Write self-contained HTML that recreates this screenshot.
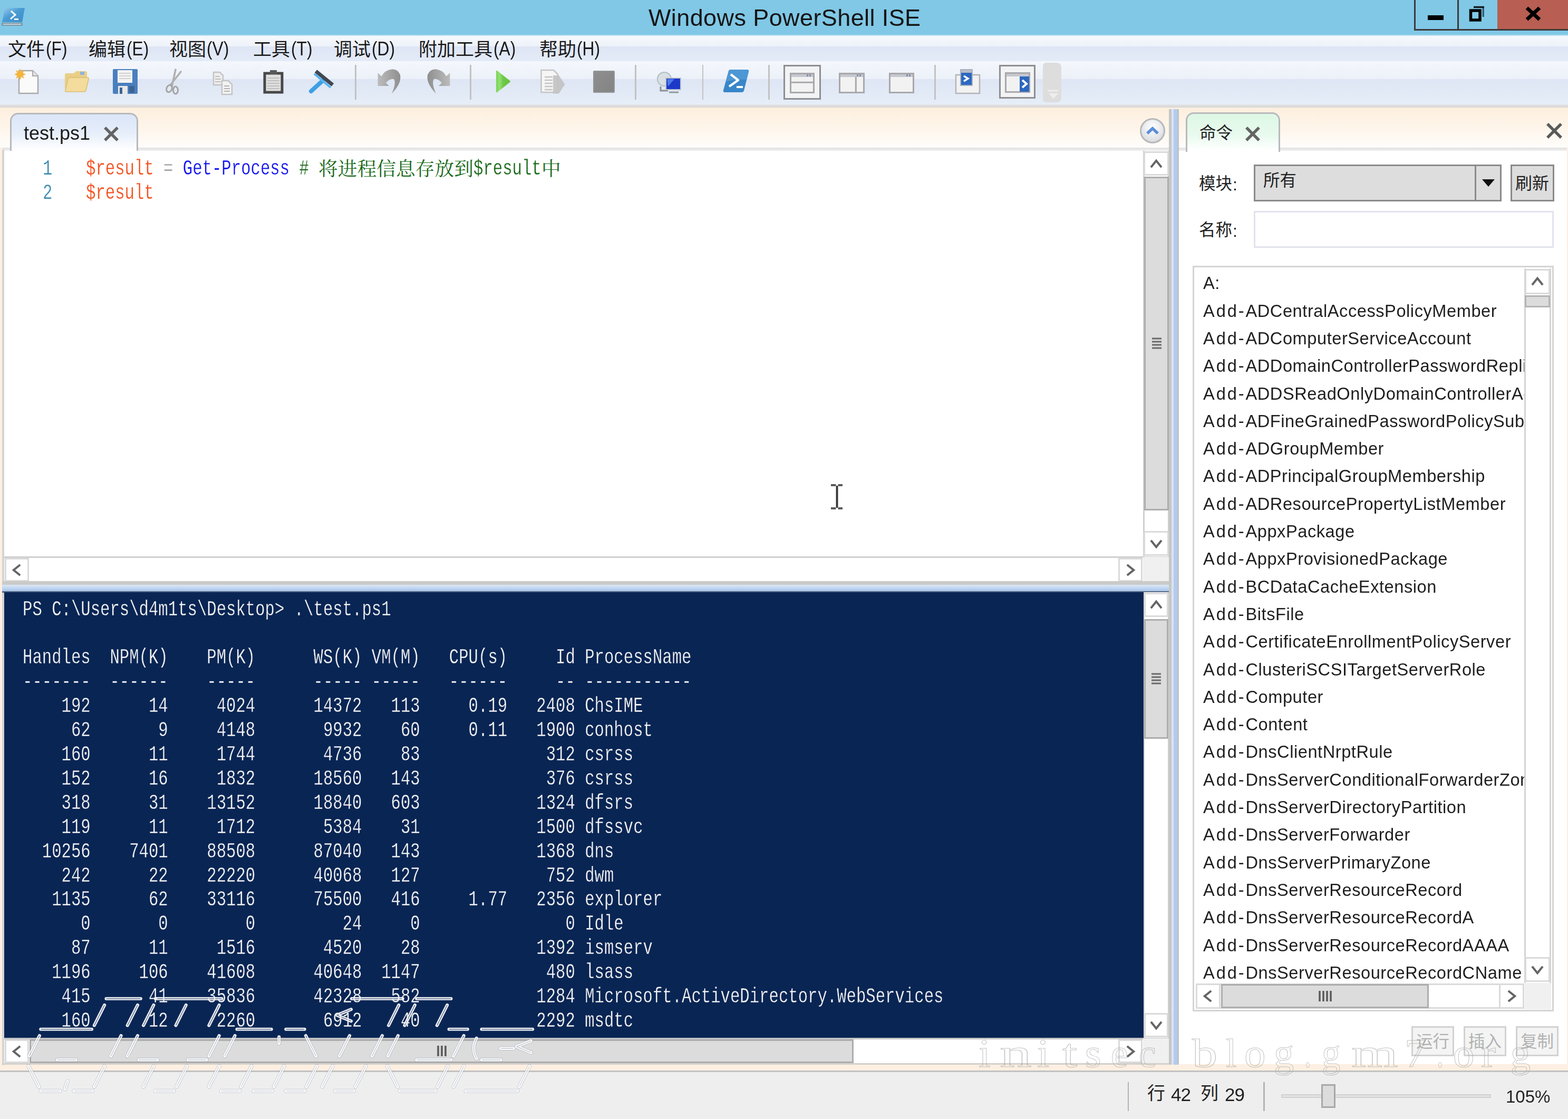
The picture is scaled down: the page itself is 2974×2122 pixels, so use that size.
<!DOCTYPE html><html><head><meta charset="utf-8"><title>Windows PowerShell ISE</title><style>
html,body{margin:0;padding:0}
body{width:2974px;height:2122px;position:relative;overflow:hidden;background:#FDF0E2;font-family:"Liberation Sans",sans-serif;color:#000}
.a{position:absolute}
.cj{position:absolute;overflow:visible}
.t{position:absolute;white-space:pre;margin:0}
.sb{position:absolute;background:#fff;border:2px solid #D8D8D8;box-sizing:border-box}
.th{position:absolute;background:#DCDCDC;border:2px solid #B0B0B0;box-sizing:border-box}
svg{display:block}
pre{margin:0}
</style></head><body><div class="a" style="left:0px;top:0px;width:2974px;height:66px;background:#80C8E6"></div><div class="a" style="left:0px;top:66px;width:2974px;height:2px;background:#B6DFF2"></div><svg class="a" style="left:2px;top:13px;" width="46" height="38" viewBox="0 0 46 38"><defs><linearGradient id="ai" x1="0" y1="0" x2="1" y2="1"><stop offset="0" stop-color="#9CCCEC"/><stop offset=".45" stop-color="#4A9CD4"/><stop offset="1" stop-color="#3C8CC8"/></linearGradient></defs><path d="M7 2 H45 L40 29 H2 Z" fill="url(#ai)"/><path d="M19 8 L27 15 L18 23" fill="none" stroke="#fff" stroke-width="3"/><path d="M25 23.5 H33" stroke="#fff" stroke-width="3"/><path d="M1 30 H41 V36 H1 Z" fill="#7C98AC"/><path d="M4 33 H38" stroke="#C4D0D8" stroke-width="2"/></svg><div class="t" style="left:1229.5px;top:10.5px;font-size:180px;line-height:180px;color:#151515;letter-spacing:1.6px;transform-origin:0 0;transform:scale(0.25000,0.25);">Windows PowerShell ISE</div><div class="a" style="left:2682px;top:-3px;width:292px;height:61px;border:3px solid #3E3A3A;box-sizing:border-box"></div><div class="a" style="left:2764px;top:0px;width:3px;height:56px;background:#3E3A3A"></div><div class="a" style="left:2840px;top:0px;width:134px;height:55px;background:#B85E52"></div><div class="a" style="left:2708px;top:29px;width:30px;height:9px;background:#000"></div><svg class="a" style="left:2784px;top:8px;" width="36" height="36" viewBox="0 0 36 36"><path d="M29.2 4 V24" fill="none" stroke="#2C5C74" stroke-width="3.4"/><path d="M11 5.5 H31" fill="none" stroke="#10181C" stroke-width="3.4"/><rect x="5.5" y="12" width="17.5" height="18" fill="none" stroke="#000" stroke-width="5.5"/></svg><svg class="a" style="left:2892px;top:12px;" width="32" height="28" viewBox="0 0 32 28"><path d="M4 3 L28 25 M28 3 L4 25" stroke="#000" stroke-width="7"/></svg><div class="a" style="left:0px;top:68px;width:2974px;height:20px;background:linear-gradient(#F6F9FC,#EDF2FA)"></div><div class="a" style="left:0px;top:88px;width:2974px;height:28px;background:linear-gradient(#DEE5F4,#E4EBF8)"></div><div class="a" style="left:0px;top:116px;width:2974px;height:34px;background:linear-gradient(#F4F7FC,#ECF1F9)"></div><div class="a" style="left:0px;top:150px;width:2974px;height:48px;background:linear-gradient(#DEE5F4,#E6EEF8)"></div><div class="a" style="left:0px;top:198px;width:2974px;height:6px;background:linear-gradient(#E4E4E4,#D6D6D6)"></div><svg class="cj" style="left:15.2px;top:72.5px;width:72.0px;height:37px;" viewBox="0 0 1946 1000" fill="#1a1a1a"><text x="0" y="880" font-size="946" font-family="'Liberation Sans','Noto Sans CJK SC',sans-serif">文件</text></svg><div class="t" style="left:86.7px;top:73.5px;font-size:148px;line-height:148px;color:#1a1a1a;transform-origin:0 0;transform:scale(0.21500,0.25);">(F)</div><svg class="cj" style="left:168.1px;top:72.5px;width:72.0px;height:37px;" viewBox="0 0 1946 1000" fill="#1a1a1a"><text x="0" y="880" font-size="946" font-family="'Liberation Sans','Noto Sans CJK SC',sans-serif">编辑</text></svg><div class="t" style="left:239.6px;top:73.5px;font-size:148px;line-height:148px;color:#1a1a1a;transform-origin:0 0;transform:scale(0.21500,0.25);">(E)</div><svg class="cj" style="left:320.9px;top:72.5px;width:72.0px;height:37px;" viewBox="0 0 1946 1000" fill="#1a1a1a"><text x="0" y="880" font-size="946" font-family="'Liberation Sans','Noto Sans CJK SC',sans-serif">视图</text></svg><div class="t" style="left:392.4px;top:73.5px;font-size:148px;line-height:148px;color:#1a1a1a;transform-origin:0 0;transform:scale(0.21500,0.25);">(V)</div><svg class="cj" style="left:480.4px;top:72.5px;width:72.0px;height:37px;" viewBox="0 0 1946 1000" fill="#1a1a1a"><text x="0" y="880" font-size="946" font-family="'Liberation Sans','Noto Sans CJK SC',sans-serif">工具</text></svg><div class="t" style="left:551.9px;top:73.5px;font-size:148px;line-height:148px;color:#1a1a1a;transform-origin:0 0;transform:scale(0.21500,0.25);">(T)</div><svg class="cj" style="left:633.2px;top:72.5px;width:72.0px;height:37px;" viewBox="0 0 1946 1000" fill="#1a1a1a"><text x="0" y="880" font-size="946" font-family="'Liberation Sans','Noto Sans CJK SC',sans-serif">调试</text></svg><div class="t" style="left:704.7px;top:73.5px;font-size:148px;line-height:148px;color:#1a1a1a;transform-origin:0 0;transform:scale(0.21500,0.25);">(D)</div><svg class="cj" style="left:794.0px;top:72.5px;width:142.0px;height:37px;" viewBox="0 0 3838 1000" fill="#1a1a1a"><text x="0" y="880" font-size="946" font-family="'Liberation Sans','Noto Sans CJK SC',sans-serif">附加工具</text></svg><div class="t" style="left:935.5px;top:73.5px;font-size:148px;line-height:148px;color:#1a1a1a;transform-origin:0 0;transform:scale(0.21500,0.25);">(A)</div><svg class="cj" style="left:1022.5px;top:72.5px;width:72.0px;height:37px;" viewBox="0 0 1946 1000" fill="#1a1a1a"><text x="0" y="880" font-size="946" font-family="'Liberation Sans','Noto Sans CJK SC',sans-serif">帮助</text></svg><div class="t" style="left:1094px;top:73.5px;font-size:148px;line-height:148px;color:#1a1a1a;transform-origin:0 0;transform:scale(0.21500,0.25);">(H)</div><div class="a" style="left:673px;top:123px;width:2.5px;height:66px;background:#C2C2C2"></div><div class="a" style="left:891px;top:123px;width:2.5px;height:66px;background:#C2C2C2"></div><div class="a" style="left:1204px;top:123px;width:2.5px;height:66px;background:#C2C2C2"></div><div class="a" style="left:1331.5px;top:123px;width:2.5px;height:66px;background:#C2C2C2"></div><div class="a" style="left:1457px;top:123px;width:2.5px;height:66px;background:#C2C2C2"></div><div class="a" style="left:1772px;top:123px;width:2.5px;height:66px;background:#C2C2C2"></div><svg class="a" style="left:28px;top:130px;" width="46" height="50" viewBox="0 0 46 50"><path d="M8 4 H34 L44 14 V47 H8 Z" fill="#FAFAFA" stroke="#AAAAAA" stroke-width="2.5"/><path d="M34 4 V14 H44" fill="#E4E4E4" stroke="#AAAAAA" stroke-width="2"/><path d="M10 0 L12.5 6 L18 3 L15.5 8.5 L21 11 L15.5 13.5 L18 19 L12.5 16 L10 22 L7.5 16 L2 19 L4.5 13.5 L-1 11 L4.5 8.5 L2 3 L7.5 6 Z" fill="#F5B53C"/></svg><svg class="a" style="left:120px;top:132px;" width="50" height="44" viewBox="0 0 50 44"><path d="M3 10 Q3 7 6 7 L20 7 L24 3 H42 Q45 3 45 6 V36 H3 Z" fill="#E9CF86"/><rect x="32" y="4" width="8" height="6" fill="#8CB4DC"/><path d="M9 18 Q10 15 13 15 H46 Q49 15 48 18 L43 39 Q42 42 39 42 H6 Q3 42 4 39 Z" fill="#F3DC9C" stroke="#D9BE74" stroke-width="1.5"/></svg><svg class="a" style="left:213px;top:130px;" width="50" height="50" viewBox="0 0 50 50"><rect x="1" y="1" width="47" height="47" rx="2" fill="#4A7FBE"/><rect x="10" y="3" width="28" height="24" fill="#F4F4F4"/><path d="M13 9 H35 M13 14 H35 M13 19 H35" stroke="#D0D0D0" stroke-width="2"/><rect x="11" y="33" width="18" height="15" fill="#E8E8E8"/><rect x="14" y="36" width="5" height="12" fill="#3C6496"/><rect x="32" y="33" width="10" height="13" fill="#3C6494"/></svg><svg class="a" style="left:312px;top:130px;" width="38" height="50" viewBox="0 0 38 50"><path d="M21 2 L14 34 M31 6 L12 30" stroke="#B0B0B0" stroke-width="3.6" stroke-linecap="round"/><ellipse cx="9" cy="38" rx="5" ry="7" fill="none" stroke="#A4A4A4" stroke-width="3" transform="rotate(25 9 38)"/><ellipse cx="21" cy="41" rx="4.5" ry="7" fill="none" stroke="#A4A4A4" stroke-width="3"/></svg><svg class="a" style="left:403px;top:135px;" width="40" height="46" viewBox="0 0 40 46"><path d="M2 2 H14 L20 8 V26 H2 Z" fill="#EEEEEE" stroke="#C4C4C4" stroke-width="2.5"/><path d="M5 10 H14 M5 15 H16 M5 20 H16" stroke="#C0C0C0" stroke-width="2"/><path d="M18 18 H30 L37 25 V44 H18 Z" fill="#F2F2F2" stroke="#C4C4C4" stroke-width="2.5"/><path d="M22 28 H32 M22 33 H33 M22 38 H33" stroke="#B4B4B4" stroke-width="2"/></svg><svg class="a" style="left:499px;top:132px;" width="40" height="46" viewBox="0 0 40 46"><rect x="3" y="7" width="33" height="36" fill="#E0E0E0" stroke="#484848" stroke-width="5"/><rect x="13" y="1" width="13" height="8" fill="#585858"/><path d="M8 16 H31 M8 21 H31 M8 26 H31 M8 31 H31 M8 36 H31" stroke="#BEBEBE" stroke-width="2"/></svg><svg class="a" style="left:585px;top:131px;" width="50" height="48" viewBox="0 0 50 48"><path d="M5 42 L27 22" stroke="#3CA0E4" stroke-width="8" stroke-linecap="round"/><path d="M14 4 L46 30" stroke="#404854" stroke-width="7"/><path d="M11 9 L42 35" stroke="#58B4F0" stroke-width="4"/></svg><svg class="a" style="left:714px;top:130px;" width="50" height="50" viewBox="0 0 50 50"><defs><linearGradient id="ug" x1="0" y1="0" x2="1" y2="0"><stop offset="0" stop-color="#BCBCBC"/><stop offset="1" stop-color="#8E8E8E"/></linearGradient></defs><path d="M2.6 8 L2.6 33 L24 33 L18 27 Q26 18 33 20 Q38 27 29 47.6 Q48 28 45 12 Q40 0 28 1.5 Q16 3 9.5 14.5 Z" fill="url(#ug)"/></svg><svg class="a" style="left:808px;top:130px;" width="50" height="50" viewBox="0 0 50 50"><path d="M2.6 8 L2.6 33 L24 33 L18 27 Q26 18 33 20 Q38 27 29 47.6 Q48 28 45 12 Q40 0 28 1.5 Q16 3 9.5 14.5 Z" fill="url(#ug)" transform="translate(48,0) scale(-1,1)"/></svg><svg class="a" style="left:938px;top:132px;" width="32" height="46" viewBox="0 0 32 46"><defs><linearGradient id="pg" x1="0" y1="0" x2="1" y2="0"><stop offset="0" stop-color="#7CD258"/><stop offset=".25" stop-color="#92E070"/><stop offset=".5" stop-color="#6CC848"/><stop offset="1" stop-color="#66C242"/></linearGradient></defs><path d="M3 3 Q3 1 5 2 L29 21 Q31 22.5 29 24 L5 43 Q3 44 3 42 Z" fill="url(#pg)"/></svg><svg class="a" style="left:1024px;top:130px;" width="50" height="50" viewBox="0 0 50 50"><path d="M2.5 3 H26 L34 11 V45 H2.5 Z" fill="#F6F6F6" stroke="#C4C4C4" stroke-width="2.5"/><path d="M9 16 H24 M9 22 H24 M9 28 H24 M9 34 H24 M9 40 H24" stroke="#C4C4C4" stroke-width="2.5"/><path d="M25 13 H36 L47.5 30 L36 47.5 H25 Z" fill="#C2C2C2" opacity=".92"/></svg><div class="a" style="left:1124.5px;top:134px;width:41px;height:41.5px;background:linear-gradient(135deg,#8E8E8E,#848484);border:2px solid #949494;box-sizing:border-box;border-radius:2px"></div><svg class="a" style="left:1245px;top:134px;" width="48" height="44" viewBox="0 0 48 44"><circle cx="15" cy="16" r="13" fill="#D8E0E4" stroke="#B0BCC4" stroke-width="2"/><path d="M8 30 V38 H22" stroke="#889098" stroke-width="3" fill="none"/><rect x="18" y="14" width="28" height="22" fill="#1C38C8" stroke="#C0C8D0" stroke-width="2"/><path d="M20 16 L34 16 L22 30 Z" fill="#4C78E8"/><path d="M24 41 H42" stroke="#9098A0" stroke-width="3"/></svg><svg class="a" style="left:1370px;top:131px;" width="52" height="48" viewBox="0 0 52 48"><path d="M12 3 Q13 1 16 1 H47 Q51 1 50 5 L41 41 Q40 44 36 44 H5 Q1 44 2 40 Z" fill="#3886C8"/><path d="M12 3 Q13 1 16 1 H47 Q51 1 50 5 L46 20 Q26 18 7 24 Z" fill="#5CA4DC" opacity=".6"/><path d="M16 10 L30 21 L13 33" fill="none" stroke="#fff" stroke-width="4.5" stroke-linejoin="round"/><path d="M27 34 H39" stroke="#fff" stroke-width="4"/></svg><div class="a" style="left:1486px;top:123px;width:71px;height:66px;background:#F2F3F5;border:3px solid #8E8E92;box-sizing:border-box"></div><svg class="a" style="left:1498px;top:138px;" width="47" height="39" viewBox="0 0 47 39"><rect x="1.5" y="1.5" width="44" height="36" fill="#F2F2F2" stroke="#A8A8AC" stroke-width="3"/><rect x="3" y="3" width="41" height="5" fill="#C6C8D0"/><rect x="32" y="3" width="3" height="4" fill="#8890A8"/><rect x="37" y="3" width="3" height="4" fill="#8890A8"/><path d="M2 18.33 H45" stroke="#A8A8AC" stroke-width="3"/></svg><svg class="a" style="left:1591px;top:138px;" width="49" height="39" viewBox="0 0 49 39"><rect x="1.5" y="1.5" width="46" height="36" fill="#F2F2F2" stroke="#A8A8AC" stroke-width="3"/><rect x="3" y="3" width="43" height="5" fill="#C6C8D0"/><rect x="34" y="3" width="3" height="4" fill="#8890A8"/><rect x="39" y="3" width="3" height="4" fill="#8890A8"/><path d="M32.34 8 V37" stroke="#A8A8AC" stroke-width="3"/></svg><svg class="a" style="left:1686px;top:138px;" width="48" height="39" viewBox="0 0 48 39"><rect x="1.5" y="1.5" width="45" height="36" fill="#F2F2F2" stroke="#A8A8AC" stroke-width="3"/><rect x="3" y="3" width="42" height="5" fill="#C6C8D0"/><rect x="33" y="3" width="3" height="4" fill="#8890A8"/><rect x="38" y="3" width="3" height="4" fill="#8890A8"/></svg><svg class="a" style="left:1811px;top:130px;" width="50" height="50" viewBox="0 0 50 50"><rect x="2" y="12" width="45" height="35" fill="#F2F2F2" stroke="#B4B4B8" stroke-width="2.5"/><rect x="11" y="2" width="22" height="30" fill="#2C68C0" stroke="#A8B0C0" stroke-width="2"/><rect x="12" y="3" width="20" height="5" fill="#B8BCC8"/><path d="M17 14 L25 19 L17 24" fill="none" stroke="#fff" stroke-width="3.5"/></svg><div class="a" style="left:1895px;top:123px;width:69px;height:64px;background:#F2F3F5;border:3px solid #8E8E92;box-sizing:border-box"></div><svg class="a" style="left:1906px;top:137px;" width="48" height="40" viewBox="0 0 48 40"><rect x="1.5" y="1.5" width="45" height="36" fill="#F2F2F2" stroke="#A8A8AC" stroke-width="3"/><rect x="3" y="3" width="42" height="5" fill="#C6C8D0"/><rect x="28" y="8" width="18" height="29" fill="#2C68C0"/><path d="M33 15 L41 22 L33 29" fill="none" stroke="#fff" stroke-width="4"/></svg><div class="a" style="left:1978px;top:119px;width:35px;height:75px;background:#DDDDDD;border-radius:6px 8px 8px 6px"></div><svg class="a" style="left:1984px;top:168px;" width="26" height="22" viewBox="0 0 26 22"><path d="M3 4 H23" stroke="#EEEEEE" stroke-width="3"/><path d="M5 9 H23 L14 19 Z" fill="#EEEEEE"/></svg><div class="a" style="left:0px;top:204px;width:2974px;height:76px;background:linear-gradient(#FDEFDE,#FEF5EA 50%,#FEFDFB)"></div><div class="a" style="left:4px;top:280px;width:2968px;height:6px;background:linear-gradient(#E0E0E0,#F0F0F0)"></div><div class="a" style="left:4px;top:284px;width:4px;height:1736px;background:#D4D4D4"></div><div class="a" style="left:19px;top:214px;width:243px;height:74px;border:3px solid #B9B9BD;border-bottom:none;border-radius:15px 15px 0 0;box-sizing:border-box;background:linear-gradient(#DDE7F8 10%,#E6EEFA 50%,#FFFFFF 95%)"></div><div class="t" style="left:45px;top:235.0px;font-size:144px;line-height:144px;color:#1c1c1c;transform-origin:0 0;transform:scale(0.25000,0.25);">test.ps1</div><svg class="a" style="left:196px;top:239px;" width="30" height="30" viewBox="0 0 30 30"><path d="M3 3 L27 27 M27 3 L3 27" stroke="#646464" stroke-width="5.5"/></svg><svg class="a" style="left:2160px;top:222px;" width="52" height="52" viewBox="0 0 52 52"><defs><radialGradient id="cg" cx=".5" cy=".35" r=".7"><stop offset="0" stop-color="#FFFFFF"/><stop offset="1" stop-color="#D4D8DC"/></radialGradient></defs><circle cx="26" cy="26" r="22.5" fill="url(#cg)" stroke="#B8B8B8" stroke-width="3"/><path d="M16 31 L26 21.5 L36 31" fill="none" stroke="#5A8EDC" stroke-width="5.6" stroke-linejoin="miter"/></svg><div class="a" style="left:8px;top:286px;width:2209px;height:820px;background:#fff"></div><pre class="t" style="left:80.5px;top:296.9px;font-family:'Liberation Mono',monospace;font-size:160px;line-height:185.2px;color:#3C8CB0;-webkit-text-stroke:1.0px #fff;transform-origin:0 0;transform:scale(0.19146,0.25);"><span style="color:#3C8CB0">1</span>
<span style="color:#3C8CB0">2</span></pre><pre class="t" style="left:163px;top:296.9px;font-family:'Liberation Mono',monospace;font-size:160px;line-height:185.2px;color:#F4511E;-webkit-text-stroke:1.0px #fff;transform-origin:0 0;transform:scale(0.19146,0.25);"><span style="color:#F4511E">$result</span> <span style="color:#A0A0A0">=</span> <span style="color:#1414F0">Get-Process</span> <span style="color:#1A6A1A"># </span>
<span style="color:#F4511E">$result</span></pre><svg class="cj" style="left:604.1px;top:300.5px;width:294.1px;height:36.76px;" viewBox="0 0 8000 1000" fill="#1A6A1A"><text x="0" y="880" font-size="1000" font-family="'Liberation Mono','Noto Serif CJK SC',serif">将进程信息存放到</text></svg><pre class="t" style="left:898.2px;top:296.9px;font-family:'Liberation Mono',monospace;font-size:160px;line-height:185.2px;color:#1A6A1A;-webkit-text-stroke:1.0px #fff;transform-origin:0 0;transform:scale(0.19146,0.25);"><span style="color:#1A6A1A">$result</span></pre><svg class="cj" style="left:1026.9px;top:300.5px;width:36.8px;height:36.76px;" viewBox="0 0 1000 1000" fill="#1A6A1A"><text x="0" y="880" font-size="1000" font-family="'Liberation Mono','Noto Serif CJK SC',serif">中</text></svg><svg class="a" style="left:1576px;top:917px;" width="24" height="50" viewBox="0 0 24 50"><path d="M0 3 H9.5 M13.5 3 H22 M0 47 H9.5 M13.5 47 H22" stroke="#5A5A5A" stroke-width="4"/><path d="M11.5 4 V46" stroke="#111" stroke-width="2.6"/><path d="M9.5 5 V45 M13.7 5 V45" stroke="#B0B0B0" stroke-width="1.2"/></svg><div class="a" style="left:2168px;top:286px;width:49px;height:770px;background:#fff;border-left:3px solid #D0D0D0;border-right:2px solid #D0D0D0;box-sizing:border-box"></div><div class="a" style="left:2169px;top:287px;width:48px;height:46px;background:#fff;border:3px solid #DADADA;box-sizing:border-box"></div><svg class="a" style="left:2173px;top:290.5px" width="40" height="40" viewBox="-20 -20 40 40"><path d="M-10 6.2 L0 -6.2 L10 6.2" fill="none" stroke="#646464" stroke-width="4"/></svg><div class="a" style="left:2170px;top:335px;width:47px;height:633px;background:#DCDCDC;border:3px solid #ADADAD;box-sizing:border-box"></div><svg class="a" style="left:2184px;top:639px;" width="20" height="24" viewBox="0 0 20 24"><path d="M1 3 H19 M1 9 H19 M1 15 H19 M1 21 H19" stroke="#6A6A6A" stroke-width="3"/></svg><div class="a" style="left:2169px;top:1007px;width:48px;height:47px;background:#fff;border:3px solid #DADADA;box-sizing:border-box"></div><svg class="a" style="left:2173px;top:1011px" width="40" height="40" viewBox="-20 -20 40 40"><path d="M-10 -6.2 L0 6.2 L10 -6.2" fill="none" stroke="#646464" stroke-width="4"/></svg><div class="a" style="left:8px;top:1055px;width:2209px;height:3px;background:#D0D0D0"></div><div class="a" style="left:8px;top:1058px;width:2160px;height:45px;background:#fff"></div><div class="a" style="left:9px;top:1058px;width:46px;height:45px;background:#fff;border:3px solid #DADADA;box-sizing:border-box"></div><svg class="a" style="left:12px;top:1060.5px" width="40" height="40" viewBox="-20 -20 40 40"><path d="M6.2 -10 L-6.2 0 L6.2 10" fill="none" stroke="#646464" stroke-width="4"/></svg><div class="a" style="left:2121px;top:1058px;width:46px;height:45px;background:#fff;border:3px solid #DADADA;box-sizing:border-box"></div><svg class="a" style="left:2124px;top:1060.5px" width="40" height="40" viewBox="-20 -20 40 40"><path d="M-6.2 -10 L6.2 0 L-6.2 10" fill="none" stroke="#646464" stroke-width="4"/></svg><div class="a" style="left:2168px;top:1056px;width:49px;height:48px;background:#F0F0F0"></div><div class="a" style="left:4px;top:1102px;width:2214px;height:7px;background:#CACAC8"></div><div class="a" style="left:4px;top:1109px;width:2214px;height:12px;background:linear-gradient(#DCE8F6,#A9C5EC)"></div><div class="a" style="left:4px;top:1121px;width:2214px;height:3px;background:#586A86"></div><div class="a" style="left:8px;top:1123px;width:2161px;height:845px;background:#092554"></div><pre class="t" style="left:43px;top:1133.0px;font-family:'Liberation Mono',monospace;font-size:160px;line-height:183.6px;color:#F4F4F4;-webkit-text-stroke:1.4px #092554;transform-origin:0 0;transform:scale(0.19146,0.25);">PS C:\Users\d4m1ts\Desktop&gt; .\test.ps1

Handles  NPM(K)    PM(K)      WS(K) VM(M)   CPU(s)     Id ProcessName
-------  ------    -----      ----- -----   ------     -- -----------
    192      14     4024      14372   113     0.19   2408 ChsIME
     62       9     4148       9932    60     0.11   1900 conhost
    160      11     1744       4736    83             312 csrss
    152      16     1832      18560   143             376 csrss
    318      31    13152      18840   603            1324 dfsrs
    119      11     1712       5384    31            1500 dfssvc
  10256    7401    88508      87040   143            1368 dns
    242      22    22220      40068   127             752 dwm
   1135      62    33116      75500   416     1.77   2356 explorer
      0       0        0         24     0               0 Idle
     87      11     1516       4520    28            1392 ismserv
   1196     106    41608      40648  1147             480 lsass
    415      41    35836      42328   582            1284 Microsoft.ActiveDirectory.WebServices
    160      12     2260       6912    40            2292 msdtc</pre><div class="a" style="left:2169px;top:1123px;width:48px;height:845px;background:#fff;border-left:2px solid #D0D0D0;border-right:2px solid #D0D0D0;box-sizing:border-box"></div><div class="a" style="left:2170px;top:1124px;width:46px;height:46px;background:#fff;border:3px solid #DADADA;box-sizing:border-box"></div><svg class="a" style="left:2173px;top:1127px" width="40" height="40" viewBox="-20 -20 40 40"><path d="M-10 6.2 L0 -6.2 L10 6.2" fill="none" stroke="#646464" stroke-width="4"/></svg><div class="a" style="left:2170px;top:1174px;width:46px;height:227px;background:#DCDCDC;border:3px solid #ADADAD;box-sizing:border-box"></div><svg class="a" style="left:2183px;top:1275px;" width="20" height="24" viewBox="0 0 20 24"><path d="M1 3 H19 M1 9 H19 M1 15 H19 M1 21 H19" stroke="#6A6A6A" stroke-width="3"/></svg><div class="a" style="left:2170px;top:1921px;width:46px;height:46px;background:#fff;border:3px solid #DADADA;box-sizing:border-box"></div><svg class="a" style="left:2173px;top:1924px" width="40" height="40" viewBox="-20 -20 40 40"><path d="M-10 -6.2 L0 6.2 L10 -6.2" fill="none" stroke="#646464" stroke-width="4"/></svg><div class="a" style="left:8px;top:1968px;width:2209px;height:3px;background:#C4C4C4"></div><div class="a" style="left:8px;top:1971px;width:2160px;height:45px;background:#fff"></div><div class="a" style="left:9px;top:1971px;width:46px;height:45px;background:#fff;border:3px solid #DADADA;box-sizing:border-box"></div><svg class="a" style="left:12px;top:1973.5px" width="40" height="40" viewBox="-20 -20 40 40"><path d="M6.2 -10 L-6.2 0 L6.2 10" fill="none" stroke="#646464" stroke-width="4"/></svg><div class="a" style="left:56px;top:1971px;width:1563px;height:45px;background:#DCDCDC;border:3px solid #ADADAD;box-sizing:border-box"></div><svg class="a" style="left:826px;top:1982px;" width="26" height="22" viewBox="0 0 26 22"><path d="M5 1 V21 M12 1 V21 M19 1 V21" stroke="#5A5A5A" stroke-width="3.6"/></svg><div class="a" style="left:2121px;top:1971px;width:46px;height:45px;background:#fff;border:3px solid #DADADA;box-sizing:border-box"></div><svg class="a" style="left:2124px;top:1973.5px" width="40" height="40" viewBox="-20 -20 40 40"><path d="M-6.2 -10 L6.2 0 L-6.2 10" fill="none" stroke="#646464" stroke-width="4"/></svg><div class="a" style="left:2168px;top:1969px;width:49px;height:48px;background:#F0F0F0"></div><div class="a" style="left:4px;top:2016px;width:2214px;height:3px;background:#D4D0CC"></div><div class="a" style="left:2217px;top:207px;width:4.5px;height:1812px;background:#C6C6C6"></div><div class="a" style="left:2221.5px;top:207px;width:4.5px;height:1812px;background:#D9E4F2"></div><div class="a" style="left:2226px;top:207px;width:7px;height:1812px;background:#B2CBF0"></div><div class="a" style="left:2233px;top:207px;width:3px;height:1812px;background:#C2C2C2"></div><div class="a" style="left:0px;top:2030px;width:2974px;height:3px;background:#C2C2C2"></div><div class="a" style="left:0px;top:2033px;width:2974px;height:89px;background:#EEEEEE"></div><div class="a" style="left:2138.5px;top:2052px;width:2.5px;height:55px;background:#B4B4B4"></div><div class="a" style="left:2396px;top:2052px;width:2.5px;height:55px;background:#B4B4B4"></div><svg class="cj" style="left:2176px;top:2055px;width:34.0px;height:34px;" viewBox="0 0 1000 1000" fill="#222"><text x="0" y="880" font-size="1000" font-family="'Liberation Sans','Noto Sans CJK SC',sans-serif">行</text></svg><div class="t" style="left:2221px;top:2057.9px;font-size:140px;line-height:140px;color:#222;letter-spacing:-4px;transform-origin:0 0;transform:scale(0.25000,0.25);">42</div><svg class="cj" style="left:2277px;top:2055px;width:34.0px;height:34px;" viewBox="0 0 1000 1000" fill="#222"><text x="0" y="880" font-size="1000" font-family="'Liberation Sans','Noto Sans CJK SC',sans-serif">列</text></svg><div class="t" style="left:2323px;top:2057.9px;font-size:140px;line-height:140px;color:#222;letter-spacing:-4px;transform-origin:0 0;transform:scale(0.25000,0.25);">29</div><div class="a" style="left:2430px;top:2075px;width:398px;height:7px;background:#E4E4E4;border:2px solid #D0D0D0;box-sizing:border-box"></div><div class="a" style="left:2506px;top:2056px;width:27px;height:45px;background:#DCDCDC;border:3px solid #A8A8A8;box-sizing:border-box"></div><div class="t" style="left:2856px;top:2063.1px;font-size:132px;line-height:132px;color:#222;transform-origin:0 0;transform:scale(0.25000,0.25);">105%</div><div class="a" style="left:2236px;top:286px;width:736px;height:1732px;background:#fff"></div><div class="a" style="left:2249px;top:213px;width:179px;height:75px;border:3px solid #B9B9BD;border-bottom:none;border-radius:15px 15px 0 0;box-sizing:border-box;background:linear-gradient(#DFF8E6 10%,#E8FAEE 55%,#FFFFFF 95%)"></div><svg class="cj" style="left:2275px;top:235px;width:63.5px;height:32px;" viewBox="0 0 1984 1000" fill="#222"><text x="0" y="880" font-size="984" font-family="'Liberation Sans','Noto Sans CJK SC',sans-serif">命令</text></svg><svg class="a" style="left:2361px;top:239px;" width="30" height="30" viewBox="0 0 30 30"><path d="M3 3 L27 27 M27 3 L3 27" stroke="#646464" stroke-width="5.5"/></svg><svg class="a" style="left:2932px;top:232px;" width="32" height="32" viewBox="0 0 32 32"><path d="M3 3 L29 29 M29 3 L3 29" stroke="#5A5A5A" stroke-width="5.5"/></svg><svg class="cj" style="left:2274px;top:331px;width:63.5px;height:32px;" viewBox="0 0 1984 1000" fill="#222"><text x="0" y="880" font-size="984" font-family="'Liberation Sans','Noto Sans CJK SC',sans-serif">模块</text></svg><div class="t" style="left:2338px;top:333.9px;font-size:128px;line-height:128px;color:#222;transform-origin:0 0;transform:scale(0.25000,0.25);">:</div><div class="a" style="left:2378px;top:311.5px;width:470px;height:70.5px;background:#DDDDDD;border:3px solid #8A8A8A;box-sizing:border-box"></div><div class="a" style="left:2797px;top:311.5px;width:3px;height:70.5px;background:#8A8A8A"></div><svg class="a" style="left:2810px;top:338px;" width="26" height="18" viewBox="0 0 26 18"><path d="M1 2 H25 L13 16 Z" fill="#111"/></svg><svg class="cj" style="left:2396px;top:325px;width:63.5px;height:32px;" viewBox="0 0 1984 1000" fill="#222"><text x="0" y="880" font-size="984" font-family="'Liberation Sans','Noto Sans CJK SC',sans-serif">所有</text></svg><div class="a" style="left:2864.5px;top:311.5px;width:83px;height:70.5px;background:#DDDDDD;border:3px solid #8A8A8A;box-sizing:border-box"></div><svg class="cj" style="left:2874px;top:331px;width:64.0px;height:32px;" viewBox="0 0 2000 1000" fill="#222"><text x="0" y="880" font-size="1000" font-family="'Liberation Sans','Noto Sans CJK SC',sans-serif">刷新</text></svg><svg class="cj" style="left:2274px;top:419px;width:63.5px;height:32px;" viewBox="0 0 1984 1000" fill="#222"><text x="0" y="880" font-size="984" font-family="'Liberation Sans','Noto Sans CJK SC',sans-serif">名称</text></svg><div class="t" style="left:2338px;top:421.9px;font-size:128px;line-height:128px;color:#222;transform-origin:0 0;transform:scale(0.25000,0.25);">:</div><div class="a" style="left:2378px;top:399.5px;width:569px;height:70.5px;background:#fff;border:3px solid #E3E3EE;box-sizing:border-box"></div><div class="a" style="left:2262px;top:504px;width:685px;height:1414px;background:#fff;border:3px solid #D4D4D4;box-sizing:border-box"></div><div class="a" style="left:2266px;top:508px;width:626px;height:1356px;overflow:hidden"><pre class="t" style="left:15.5px;top:3.4px;font-family:'Liberation Sans',sans-serif;font-size:130.4px;line-height:209.2px;color:#1e1e1e;letter-spacing:2.2px;transform-origin:0 0;transform:scale(0.25)">A:
<span style="letter-spacing:11.6px">Add-</span>ADCentralAccessPolicyMember
<span style="letter-spacing:11.6px">Add-</span>ADComputerServiceAccount
<span style="letter-spacing:11.6px">Add-</span>ADDomainControllerPasswordReplicationPolicy
<span style="letter-spacing:11.6px">Add-</span>ADDSReadOnlyDomainControllerAccount
<span style="letter-spacing:11.6px">Add-</span>ADFineGrainedPasswordPolicySubject
<span style="letter-spacing:11.6px">Add-</span>ADGroupMember
<span style="letter-spacing:11.6px">Add-</span>ADPrincipalGroupMembership
<span style="letter-spacing:11.6px">Add-</span>ADResourcePropertyListMember
<span style="letter-spacing:11.6px">Add-</span>AppxPackage
<span style="letter-spacing:11.6px">Add-</span>AppxProvisionedPackage
<span style="letter-spacing:11.6px">Add-</span>BCDataCacheExtension
<span style="letter-spacing:11.6px">Add-</span>BitsFile
<span style="letter-spacing:11.6px">Add-</span>CertificateEnrollmentPolicyServer
<span style="letter-spacing:11.6px">Add-</span>ClusteriSCSITargetServerRole
<span style="letter-spacing:11.6px">Add-</span>Computer
<span style="letter-spacing:11.6px">Add-</span>Content
<span style="letter-spacing:11.6px">Add-</span>DnsClientNrptRule
<span style="letter-spacing:11.6px">Add-</span>DnsServerConditionalForwarderZone
<span style="letter-spacing:11.6px">Add-</span>DnsServerDirectoryPartition
<span style="letter-spacing:11.6px">Add-</span>DnsServerForwarder
<span style="letter-spacing:11.6px">Add-</span>DnsServerPrimaryZone
<span style="letter-spacing:11.6px">Add-</span>DnsServerResourceRecord
<span style="letter-spacing:11.6px">Add-</span>DnsServerResourceRecordA
<span style="letter-spacing:11.6px">Add-</span>DnsServerResourceRecordAAAA
<span style="letter-spacing:11.6px">Add-</span>DnsServerResourceRecordCName</pre></div><div class="a" style="left:2891px;top:509px;width:51px;height:1355px;background:#fff;border-left:3px solid #D4D4D4;border-right:3px solid #D4D4D4;box-sizing:border-box"></div><div class="a" style="left:2892px;top:510px;width:48px;height:48px;background:#fff;border:3px solid #DADADA;box-sizing:border-box"></div><svg class="a" style="left:2896px;top:514px" width="40" height="40" viewBox="-20 -20 40 40"><path d="M-10 6.2 L0 -6.2 L10 6.2" fill="none" stroke="#646464" stroke-width="4"/></svg><div class="a" style="left:2892px;top:560px;width:48px;height:23px;background:#DCDCDC;border:3px solid #B4B4B4;box-sizing:border-box"></div><div class="a" style="left:2892px;top:1815px;width:48px;height:47px;background:#fff;border:3px solid #DADADA;box-sizing:border-box"></div><svg class="a" style="left:2896px;top:1819px" width="40" height="40" viewBox="-20 -20 40 40"><path d="M-10 -6.2 L0 6.2 L10 -6.2" fill="none" stroke="#646464" stroke-width="4"/></svg><div class="a" style="left:2268px;top:1865px;width:623px;height:48px;background:#fff;border:3px solid #DADADA;box-sizing:border-box"></div><div class="a" style="left:2268px;top:1865px;width:47px;height:48px;background:#fff;border:3px solid #DADADA;box-sizing:border-box"></div><svg class="a" style="left:2271px;top:1869px" width="40" height="40" viewBox="-20 -20 40 40"><path d="M6.2 -10 L-6.2 0 L6.2 10" fill="none" stroke="#646464" stroke-width="4"/></svg><div class="a" style="left:2316px;top:1866px;width:394px;height:46px;background:#DCDCDC;border:3px solid #ADADAD;box-sizing:border-box"></div><svg class="a" style="left:2500px;top:1878px;" width="28" height="22" viewBox="0 0 28 22"><path d="M3 1 V21 M10 1 V21 M17 1 V21 M24 1 V21" stroke="#5A5A5A" stroke-width="3.5"/></svg><div class="a" style="left:2843px;top:1865px;width:48px;height:48px;background:#fff;border:3px solid #DADADA;box-sizing:border-box"></div><svg class="a" style="left:2847px;top:1869px" width="40" height="40" viewBox="-20 -20 40 40"><path d="M-6.2 -10 L6.2 0 L-6.2 10" fill="none" stroke="#646464" stroke-width="4"/></svg><div class="a" style="left:2892px;top:1864px;width:50px;height:50px;background:#F0F0F0"></div><div class="a" style="left:2676.5px;top:1946px;width:81px;height:57px;background:#F4F4F4;border:3px solid #D2D2D2;box-sizing:border-box"></div><svg class="cj" style="left:2685.5px;top:1958px;width:63.5px;height:32px;" viewBox="0 0 1984 1000" fill="#B2B2B2"><text x="0" y="880" font-size="984" font-family="'Liberation Sans','Noto Sans CJK SC',sans-serif">运行</text></svg><div class="a" style="left:2775.5px;top:1946px;width:81px;height:57px;background:#F4F4F4;border:3px solid #D2D2D2;box-sizing:border-box"></div><svg class="cj" style="left:2784.5px;top:1958px;width:63.5px;height:32px;" viewBox="0 0 1984 1000" fill="#B2B2B2"><text x="0" y="880" font-size="984" font-family="'Liberation Sans','Noto Sans CJK SC',sans-serif">插入</text></svg><div class="a" style="left:2874.5px;top:1946px;width:81px;height:57px;background:#F4F4F4;border:3px solid #D2D2D2;box-sizing:border-box"></div><svg class="cj" style="left:2883.5px;top:1958px;width:63.5px;height:32px;" viewBox="0 0 1984 1000" fill="#B2B2B2"><text x="0" y="880" font-size="984" font-family="'Liberation Sans','Noto Sans CJK SC',sans-serif">复制</text></svg><svg class="a" style="left:0;top:1880px" width="1100" height="242" viewBox="0 1880 1100 242"><defs><mask id="wm" maskUnits="userSpaceOnUse" x="0" y="1880" width="1100" height="242"><path d="M201.5 1893.8 L266.8 1893.8 M294.8 1893.8 L420.5 1893.8 M667.0 1893.8 L763.7 1893.8 M790.2 1893.8 L855.5 1893.8 M198.2 1905.9 L178.8 1944.6 M261.0 1905.9 L241.7 1944.6 M291.4 1905.9 L272.1 1944.6 M352.8 1905.9 L333.5 1944.6 M415.7 1905.9 L396.3 1944.6 M756.4 1905.9 L737.1 1944.6 M786.9 1905.9 L767.5 1944.6 M848.2 1905.9 L828.9 1944.6 M77.3 1951.8 L174.0 1951.8 M449.5 1951.8 L514.7 1951.8 M542.3 1951.8 L577.6 1951.8 M851.6 1951.8 L886.9 1951.8 M913.5 1951.8 L1010.1 1951.8 M74.9 1963.9 L55.6 2002.6 M229.6 1963.9 L210.2 2002.6 M261.0 1963.9 L241.7 2002.6 M415.7 1963.9 L396.3 2002.6 M445.6 1963.9 L426.3 2002.6 M663.1 1963.9 L643.8 2002.6 M725.0 1963.9 L705.7 2002.6 M755.0 1963.9 L735.6 2002.6 M879.7 1963.9 L860.3 2002.6 M580.0 1963.9 L599.3 2002.6 M108.7 2009.8 L144.0 2009.8 M263.4 2009.8 L298.7 2009.8 M356.7 2009.8 L391.5 2009.8 M790.2 2009.8 L855.5 2009.8 M913.5 2009.8 L949.7 2009.8 M54.1 2021.9 L73.5 2060.6 M734.7 2021.9 L754.0 2060.6 M198.2 2021.9 L178.8 2060.6 M291.4 2021.9 L272.1 2060.6 M354.3 2021.9 L334.9 2060.6 M415.7 2021.9 L396.3 2060.6 M477.0 2021.9 L457.7 2060.6 M538.9 2021.9 L519.6 2060.6 M600.8 2021.9 L581.4 2060.6 M630.7 2021.9 L611.4 2060.6 M693.6 2021.9 L674.2 2060.6 M849.2 2021.9 L829.9 2060.6 M879.7 2021.9 L860.3 2060.6 M1004.3 2021.9 L985.0 2060.6 M77.3 2068.8 L113.6 2068.8 M140.2 2068.8 L175.0 2068.8 M294.8 2068.8 L329.6 2068.8 M419.5 2068.8 L454.3 2068.8 M480.9 2068.8 L515.7 2068.8 M542.3 2068.8 L577.6 2068.8 M635.6 2068.8 L670.9 2068.8 M758.8 2068.8 L825.5 2068.8 M883.5 2068.8 L981.2 2068.8 M666.0 1914.1 L639.0 1925.2 L666.0 1936.4 M1006.8 1973.6 L979.7 1984.7 L1006.8 1995.8 M529.2 1966.3 L529.2 1978.4 M903.8 1968.7 Q893.2 1988.1 903.8 2007.4 M949.7 1988.1 L973.9 1988.1 M128.1 2050.9 L123.2 2065.4 " fill="none" stroke="#fff" stroke-width="5.6" stroke-linecap="round" stroke-linejoin="round"/><path d="M201.5 1893.8 L266.8 1893.8 M294.8 1893.8 L420.5 1893.8 M667.0 1893.8 L763.7 1893.8 M790.2 1893.8 L855.5 1893.8 M198.2 1905.9 L178.8 1944.6 M261.0 1905.9 L241.7 1944.6 M291.4 1905.9 L272.1 1944.6 M352.8 1905.9 L333.5 1944.6 M415.7 1905.9 L396.3 1944.6 M756.4 1905.9 L737.1 1944.6 M786.9 1905.9 L767.5 1944.6 M848.2 1905.9 L828.9 1944.6 M77.3 1951.8 L174.0 1951.8 M449.5 1951.8 L514.7 1951.8 M542.3 1951.8 L577.6 1951.8 M851.6 1951.8 L886.9 1951.8 M913.5 1951.8 L1010.1 1951.8 M74.9 1963.9 L55.6 2002.6 M229.6 1963.9 L210.2 2002.6 M261.0 1963.9 L241.7 2002.6 M415.7 1963.9 L396.3 2002.6 M445.6 1963.9 L426.3 2002.6 M663.1 1963.9 L643.8 2002.6 M725.0 1963.9 L705.7 2002.6 M755.0 1963.9 L735.6 2002.6 M879.7 1963.9 L860.3 2002.6 M580.0 1963.9 L599.3 2002.6 M108.7 2009.8 L144.0 2009.8 M263.4 2009.8 L298.7 2009.8 M356.7 2009.8 L391.5 2009.8 M790.2 2009.8 L855.5 2009.8 M913.5 2009.8 L949.7 2009.8 M54.1 2021.9 L73.5 2060.6 M734.7 2021.9 L754.0 2060.6 M198.2 2021.9 L178.8 2060.6 M291.4 2021.9 L272.1 2060.6 M354.3 2021.9 L334.9 2060.6 M415.7 2021.9 L396.3 2060.6 M477.0 2021.9 L457.7 2060.6 M538.9 2021.9 L519.6 2060.6 M600.8 2021.9 L581.4 2060.6 M630.7 2021.9 L611.4 2060.6 M693.6 2021.9 L674.2 2060.6 M849.2 2021.9 L829.9 2060.6 M879.7 2021.9 L860.3 2060.6 M1004.3 2021.9 L985.0 2060.6 M77.3 2068.8 L113.6 2068.8 M140.2 2068.8 L175.0 2068.8 M294.8 2068.8 L329.6 2068.8 M419.5 2068.8 L454.3 2068.8 M480.9 2068.8 L515.7 2068.8 M542.3 2068.8 L577.6 2068.8 M635.6 2068.8 L670.9 2068.8 M758.8 2068.8 L825.5 2068.8 M883.5 2068.8 L981.2 2068.8 M666.0 1914.1 L639.0 1925.2 L666.0 1936.4 M1006.8 1973.6 L979.7 1984.7 L1006.8 1995.8 M529.2 1966.3 L529.2 1978.4 M903.8 1968.7 Q893.2 1988.1 903.8 2007.4 M949.7 1988.1 L973.9 1988.1 M128.1 2050.9 L123.2 2065.4 " fill="none" stroke="#555" stroke-width="2" stroke-linecap="butt" stroke-linejoin="round"/></mask></defs><path d="M201.5 1893.8 L266.8 1893.8 M294.8 1893.8 L420.5 1893.8 M667.0 1893.8 L763.7 1893.8 M790.2 1893.8 L855.5 1893.8 M198.2 1905.9 L178.8 1944.6 M261.0 1905.9 L241.7 1944.6 M291.4 1905.9 L272.1 1944.6 M352.8 1905.9 L333.5 1944.6 M415.7 1905.9 L396.3 1944.6 M756.4 1905.9 L737.1 1944.6 M786.9 1905.9 L767.5 1944.6 M848.2 1905.9 L828.9 1944.6 M77.3 1951.8 L174.0 1951.8 M449.5 1951.8 L514.7 1951.8 M542.3 1951.8 L577.6 1951.8 M851.6 1951.8 L886.9 1951.8 M913.5 1951.8 L1010.1 1951.8 M74.9 1963.9 L55.6 2002.6 M229.6 1963.9 L210.2 2002.6 M261.0 1963.9 L241.7 2002.6 M415.7 1963.9 L396.3 2002.6 M445.6 1963.9 L426.3 2002.6 M663.1 1963.9 L643.8 2002.6 M725.0 1963.9 L705.7 2002.6 M755.0 1963.9 L735.6 2002.6 M879.7 1963.9 L860.3 2002.6 M580.0 1963.9 L599.3 2002.6 M108.7 2009.8 L144.0 2009.8 M263.4 2009.8 L298.7 2009.8 M356.7 2009.8 L391.5 2009.8 M790.2 2009.8 L855.5 2009.8 M913.5 2009.8 L949.7 2009.8 M54.1 2021.9 L73.5 2060.6 M734.7 2021.9 L754.0 2060.6 M198.2 2021.9 L178.8 2060.6 M291.4 2021.9 L272.1 2060.6 M354.3 2021.9 L334.9 2060.6 M415.7 2021.9 L396.3 2060.6 M477.0 2021.9 L457.7 2060.6 M538.9 2021.9 L519.6 2060.6 M600.8 2021.9 L581.4 2060.6 M630.7 2021.9 L611.4 2060.6 M693.6 2021.9 L674.2 2060.6 M849.2 2021.9 L829.9 2060.6 M879.7 2021.9 L860.3 2060.6 M1004.3 2021.9 L985.0 2060.6 M77.3 2068.8 L113.6 2068.8 M140.2 2068.8 L175.0 2068.8 M294.8 2068.8 L329.6 2068.8 M419.5 2068.8 L454.3 2068.8 M480.9 2068.8 L515.7 2068.8 M542.3 2068.8 L577.6 2068.8 M635.6 2068.8 L670.9 2068.8 M758.8 2068.8 L825.5 2068.8 M883.5 2068.8 L981.2 2068.8 M666.0 1914.1 L639.0 1925.2 L666.0 1936.4 M1006.8 1973.6 L979.7 1984.7 L1006.8 1995.8 M529.2 1966.3 L529.2 1978.4 M903.8 1968.7 Q893.2 1988.1 903.8 2007.4 M949.7 1988.1 L973.9 1988.1 M128.1 2050.9 L123.2 2065.4 " fill="none" stroke="#7C88A0" stroke-opacity=".35" stroke-width="7.6" stroke-linecap="round" stroke-linejoin="round"/><rect x="0" y="1880" width="1100" height="242" fill="#fff" mask="url(#wm)"/></svg><div class="t" style="left:1855.5px;top:1958.9px;font-family:'Liberation Serif',serif;font-size:304px;line-height:304px;color:transparent;-webkit-text-stroke:4px rgba(160,160,160,.62);transform-origin:0 0;transform:scale(0.2679,0.25)">i</div><div class="t" style="left:1896.0px;top:1958.9px;font-family:'Liberation Serif',serif;font-size:304px;line-height:304px;color:transparent;-webkit-text-stroke:4px rgba(160,160,160,.62);transform-origin:0 0;transform:scale(0.4013,0.25)">n</div><div class="t" style="left:1967.0px;top:1958.9px;font-family:'Liberation Serif',serif;font-size:304px;line-height:304px;color:transparent;-webkit-text-stroke:4px rgba(160,160,160,.62);transform-origin:0 0;transform:scale(0.2738,0.25)">i</div><div class="t" style="left:2015.0px;top:1958.9px;font-family:'Liberation Serif',serif;font-size:304px;line-height:304px;color:transparent;-webkit-text-stroke:4px rgba(160,160,160,.62);transform-origin:0 0;transform:scale(0.3333,0.25)">t</div><div class="t" style="left:2058.0px;top:1958.9px;font-family:'Liberation Serif',serif;font-size:304px;line-height:304px;color:transparent;-webkit-text-stroke:4px rgba(160,160,160,.62);transform-origin:0 0;transform:scale(0.2583,0.25)">s</div><div class="t" style="left:2106.5px;top:1958.9px;font-family:'Liberation Serif',serif;font-size:304px;line-height:304px;color:transparent;-webkit-text-stroke:4px rgba(160,160,160,.62);transform-origin:0 0;transform:scale(0.2419,0.25)">e</div><div class="t" style="left:2159.7px;top:1958.9px;font-family:'Liberation Serif',serif;font-size:304px;line-height:304px;color:transparent;-webkit-text-stroke:4px rgba(160,160,160,.62);transform-origin:0 0;transform:scale(0.2426,0.25)">c</div><div class="t" style="left:2261.0px;top:1958.9px;font-family:'Liberation Serif',serif;font-size:304px;line-height:304px;color:transparent;-webkit-text-stroke:4px rgba(160,160,160,.62);transform-origin:0 0;transform:scale(0.3158,0.25)">b</div><div class="t" style="left:2324.5px;top:1958.9px;font-family:'Liberation Serif',serif;font-size:304px;line-height:304px;color:transparent;-webkit-text-stroke:4px rgba(160,160,160,.62);transform-origin:0 0;transform:scale(0.2417,0.25)">l</div><div class="t" style="left:2360.0px;top:1958.9px;font-family:'Liberation Serif',serif;font-size:304px;line-height:304px;color:transparent;-webkit-text-stroke:4px rgba(160,160,160,.62);transform-origin:0 0;transform:scale(0.2664,0.25)">o</div><div class="t" style="left:2415.7px;top:1958.9px;font-family:'Liberation Serif',serif;font-size:304px;line-height:304px;color:transparent;-webkit-text-stroke:4px rgba(160,160,160,.62);transform-origin:0 0;transform:scale(0.2507,0.25)">g</div><div class="t" style="left:2474.0px;top:1958.9px;font-family:'Liberation Serif',serif;font-size:304px;line-height:304px;color:transparent;-webkit-text-stroke:4px rgba(160,160,160,.62);transform-origin:0 0;transform:scale(0.1671,0.25)">.</div><div class="t" style="left:2507.0px;top:1958.9px;font-family:'Liberation Serif',serif;font-size:304px;line-height:304px;color:transparent;-webkit-text-stroke:4px rgba(160,160,160,.62);transform-origin:0 0;transform:scale(0.2336,0.25)">g</div><div class="t" style="left:2562.8px;top:1958.9px;font-family:'Liberation Serif',serif;font-size:304px;line-height:304px;color:transparent;-webkit-text-stroke:4px rgba(160,160,160,.62);transform-origin:0 0;transform:scale(0.3758,0.25)">m</div><div class="t" style="left:2664.0px;top:1958.9px;font-family:'Liberation Serif',serif;font-size:304px;line-height:304px;color:transparent;-webkit-text-stroke:4px rgba(160,160,160,.62);transform-origin:0 0;transform:scale(0.2678,0.25)">7</div><div class="t" style="left:2725.0px;top:1958.9px;font-family:'Liberation Serif',serif;font-size:304px;line-height:304px;color:transparent;-webkit-text-stroke:4px rgba(160,160,160,.62);transform-origin:0 0;transform:scale(0.1671,0.25)">.</div><div class="t" style="left:2755.5px;top:1958.9px;font-family:'Liberation Serif',serif;font-size:304px;line-height:304px;color:transparent;-webkit-text-stroke:4px rgba(160,160,160,.62);transform-origin:0 0;transform:scale(0.2664,0.25)">o</div><div class="t" style="left:2808.7px;top:1958.9px;font-family:'Liberation Serif',serif;font-size:304px;line-height:304px;color:transparent;-webkit-text-stroke:4px rgba(160,160,160,.62);transform-origin:0 0;transform:scale(0.2790,0.25)">r</div><div class="t" style="left:2864.5px;top:1958.9px;font-family:'Liberation Serif',serif;font-size:304px;line-height:304px;color:transparent;-webkit-text-stroke:4px rgba(160,160,160,.62);transform-origin:0 0;transform:scale(0.2500,0.25)">g</div></body></html>
